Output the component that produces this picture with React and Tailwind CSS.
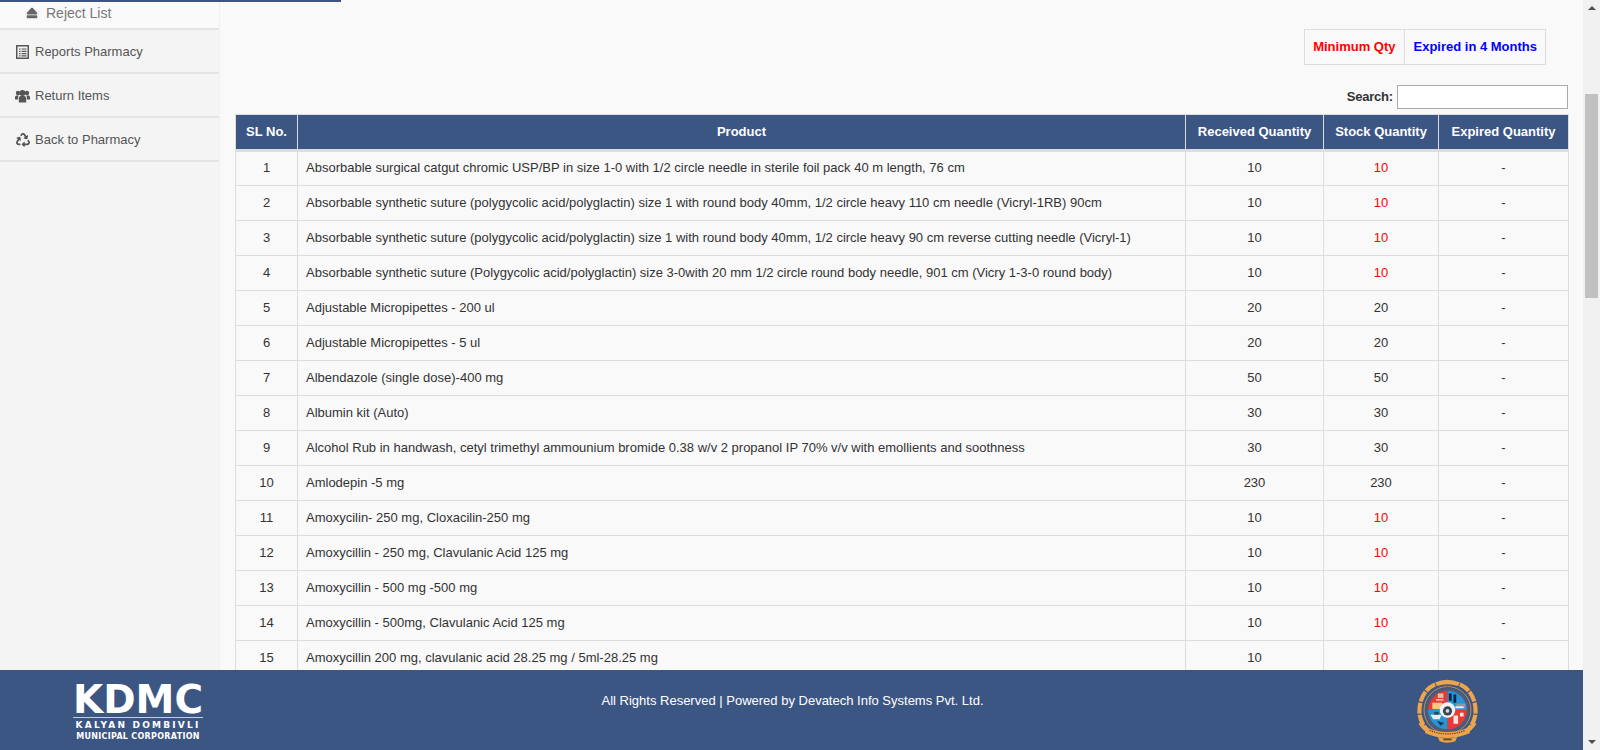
import React from "react";
import { FaEject, FaRecycle } from "react-icons/fa";

const rows = [
  ["Absorbable surgical catgut chromic USP/BP in size 1-0 with 1/2 circle needle in sterile foil pack 40 m length, 76 cm", 10, 10, true],
  ["Absorbable synthetic suture (polygycolic acid/polyglactin) size 1 with round body 40mm, 1/2 circle heavy 110 cm needle (Vicryl-1RB) 90cm", 10, 10, true],
  ["Absorbable synthetic suture (polygycolic acid/polyglactin) size 1 with round body 40mm, 1/2 circle heavy 90 cm reverse cutting needle (Vicryl-1)", 10, 10, true],
  ["Absorbable synthetic suture (Polygycolic acid/polyglactin) size 3-0with 20 mm 1/2 circle round body needle, 901 cm (Vicry 1-3-0 round body)", 10, 10, true],
  ["Adjustable Micropipettes - 200 ul", 20, 20, false],
  ["Adjustable Micropipettes - 5 ul", 20, 20, false],
  ["Albendazole (single dose)-400 mg", 50, 50, false],
  ["Albumin kit (Auto)", 30, 30, false],
  ["Alcohol Rub in handwash, cetyl trimethyl ammounium bromide 0.38 w/v 2 propanol IP 70% v/v with emollients and soothness", 30, 30, false],
  ["Amlodepin -5 mg", 230, 230, false],
  ["Amoxycilin- 250 mg, Cloxacilin-250 mg", 10, 10, true],
  ["Amoxycillin - 250 mg, Clavulanic Acid 125 mg", 10, 10, true],
  ["Amoxycillin - 500 mg -500 mg", 10, 10, true],
  ["Amoxycillin - 500mg, Clavulanic Acid 125 mg", 10, 10, true],
  ["Amoxycillin 200 mg, clavulanic acid 28.25 mg / 5ml-28.25 mg", 10, 10, true],
];

const th = "border border-[#dddddd] font-bold text-white text-center px-2 h-[36px] border-b-[3px]";
const td = "border border-[#dddddd] h-[35px] px-2 text-center text-[#333333]";

function ListAlt() {
  return (
    <svg width="13" height="14" viewBox="0 0 13 14">
      <rect x="0.75" y="0.75" width="11.5" height="12.5" fill="none" stroke="#555555" strokeWidth="1.5" />
      <path d="M3 4h1.5M3 6.3h1.5M3 8.6h1.5M3 10.9h1.5" stroke="#555555" strokeWidth="1.2" />
      <path d="M5.5 4h5M5.5 6.3h5M5.5 8.6h5M5.5 10.9h5" stroke="#555555" strokeWidth="1.2" />
    </svg>
  );
}

function Users() {
  return (
    <svg width="15" height="14" viewBox="0 0 15 14" fill="#555555">
      <circle cx="3" cy="4" r="2.2" />
      <circle cx="12" cy="4" r="2.2" />
      <path d="M0 10.5V8.2C0 7 1 6.5 2 6.5h1.8c-.6.8-.8 1.6-.8 4z" />
      <path d="M15 10.5V8.2c0-1.200-1-1.700-2-1.700h-1.800c.6.800.8 1.600.8 4z" />
      <circle cx="7.500" cy="4" r="3" />
      <path d="M3.800 13.500V9.500c0-1.700 1-2.500 2.200-2.500h3c1.200 0 2.200.8 2.200 2.500v4z" />
    </svg>
  );
}

function NavItem({ icon, label }) {
  return (
    <div className="h-[44px] flex items-center pl-[15px] gap-[5px] pt-[2px] border-b-2 border-[#e4e4e4] text-[13px] text-[#555555]">
      <span className="w-[15px] flex justify-center text-[14px]">{icon}</span>
      <span>{label}</span>
    </div>
  );
}

function Crest() {
  return (
    <svg width="75" height="75" viewBox="0 0 75 75">
      <g transform="translate(37.500 37.500) scale(0.92) translate(-37.500 -37.500)">
        <path d="M24 9C13 14 7 25 7 38c0 8 3 15 8 20" fill="none" stroke="#eea44a" strokeWidth="4.500" strokeDasharray="12 1.200" />
        <path d="M51 9c11 5 17 16 17 29 0 8-3 15-8 20" fill="none" stroke="#eea44a" strokeWidth="4.500" strokeDasharray="12 1.200" />
        <path d="M24 7Q37 1 51 7l-2 4Q37 7 26 11z" fill="#eea44a" />
        <rect x="31" y="11" width="13" height="3" fill="#3b4a68" />
        <circle cx="37.500" cy="37" r="24" fill="#4d5c78" />
        <circle cx="37.500" cy="37" r="25.500" fill="none" stroke="#c99a50" strokeWidth="1" />
        <path d="M37.500 16A21 21 0 0 0 16.500 37H37.500Z" fill="#e63a36" />
        <path d="M37.500 16A21 21 0 0 1 58.500 37H37.500Z" fill="#2595d6" />
        <path d="M16.500 37A21 21 0 0 0 37.500 58V37Z" fill="#2595d6" />
        <path d="M58.500 37A21 21 0 0 1 37.500 58V37Z" fill="#e63a36" />
        <rect x="21" y="29" width="11" height="7" fill="#f6c88a" />
        <path d="M27 19h6v5h-6zM25 25h8v2h-8z" fill="#f4b9a0" />
        <path d="M39 19h3v8h-3zM44 20h3v9h-3z" fill="#15233f" />
        <path d="M47 30h10v5H47z" fill="#8d97a6" />
        <path d="M46 33h9v2h-9z" fill="#f2f2f2" />
        <path d="M19 42h12l-2 5H22z" fill="#e9eef3" />
        <path d="M23 39h5v3h-5z" fill="#38465e" />
        <path d="M26 49l8 2-4 3z" fill="#26334d" />
        <path d="M44 43h5v9h-5zM51 40h4v4h-4z" fill="#f8e3da" />
        <circle cx="37.500" cy="37" r="8.500" fill="#f2f2f2" />
        <circle cx="37.500" cy="38" r="5" fill="#3a4257" />
        <circle cx="37.500" cy="38" r="2" fill="#d7dae0" />
        <path d="M9 50c3 3 5 6 8 8l-3 3c-3-2-6-6-8-9z" fill="#eea44a" />
        <path d="M66 50c-3 3-5 6-8 8l3 3c3-2 6-6 8-9z" fill="#eea44a" />
        <path d="M15 56Q37 66 60 56l2 6Q37 73 13 62z" fill="#eea44a" />
        <path d="M18 59Q37 67 57 59" fill="none" stroke="#6a4a2a" strokeWidth="1.300" strokeDasharray="1.500 1" />
        <path d="M27 66Q37 70 48 66l-2 5Q37 74 29 71z" fill="#eea44a" />
        <rect x="33" y="68" width="9" height="2" fill="#6a4a2a" />
      </g>
    </svg>
  );
}

export default function App() {
  return (
    <div className="h-[750px] w-[1600px] overflow-hidden flex bg-[#f9f9f9] font-['Liberation_Sans',Arial,sans-serif] text-[13px]">
      <div className="w-[1583px] h-[750px] flex flex-col relative">
        <div className="absolute top-0 left-0 w-[341px] h-[2px] bg-[#3c5684]" />
        <div className="flex-1 min-h-0 flex">
          <aside className="w-[220px] shrink-0 bg-[#f4f4f4] border-r border-[#f0f0f0]">
            <div className="h-[30px] bg-[#fafafa] border-b-2 border-[#e4e4e4] flex items-center pl-[26px] pb-[2px] gap-[8px] text-[14px] text-[#777777]">
              <FaEject className="text-[#666666] text-[12px]" />
              <span>Reject List</span>
            </div>
            <NavItem icon={<ListAlt />} label="Reports Pharmacy" />
            <NavItem icon={<Users />} label="Return Items" />
            <NavItem icon={<FaRecycle className="text-[#555555]" />} label="Back to Pharmacy" />
          </aside>
          <main className="flex-1 min-w-0 pl-[15px] pr-[15px] overflow-hidden">
            <div className="flex justify-end pt-[29px] pr-[22px]">
              <div className="flex h-[36px] border border-[#dddddd] font-bold">
                <div className="pl-[8px] pr-[9px] flex items-center text-[#ff0000] border-r border-[#dddddd]">Minimum Qty</div>
                <div className="px-[8px] flex items-center text-[#0000ff]">Expired in 4 Months</div>
              </div>
            </div>
            <div className="flex justify-end items-center gap-[4px] mt-[20px] h-[24px] font-bold text-[#333333]">
              <span className="tracking-[-0.2px]">Search:</span>
              <input className="w-[171px] h-[24px] border border-[#aaaaaa] bg-white" />
            </div>
            <table className="mt-[5px] w-[1333px] table-fixed border-collapse">
              <colgroup>
                <col className="w-[62px]" />
                <col className="w-[888px]" />
                <col className="w-[138px]" />
                <col className="w-[115px]" />
                <col className="w-[130px]" />
              </colgroup>
              <thead>
                <tr className="bg-[#3c5684]">
                  <th className={th}>SL No.</th>
                  <th className={th}>Product</th>
                  <th className={th}>Received Quantity</th>
                  <th className={th}>Stock Quantity</th>
                  <th className={th}>Expired Quantity</th>
                </tr>
              </thead>
              <tbody>
                {rows.map((r, i) => (
                  <tr key={i} className={i === 0 ? "[&>td]:pb-[2px]" : ""}>
                    <td className={td}>{i + 1}</td>
                    <td className={td + " !text-left"}>{r[0]}</td>
                    <td className={td}>{r[1]}</td>
                    <td className={td + (r[3] ? " !text-[#ff0000]" : "")}>{r[2]}</td>
                    <td className={td}>-</td>
                  </tr>
                ))}
              </tbody>
            </table>
          </main>
        </div>
        <footer className="h-[80px] shrink-0 bg-[#3c5684] flex items-center text-white">
          <div className="w-[73px] shrink-0" />
          <div className="w-[130px] shrink-0 flex flex-col items-stretch pt-[5px] font-['DejaVu_Sans',sans-serif]">
            <div className="font-bold text-[39px] leading-[33px] border-b border-[#c5cede] pb-[1px] text-center whitespace-nowrap">KDMC</div>
            <div className="text-[9px] leading-[11px] mt-[2px] font-bold tracking-[2.2px] text-center whitespace-nowrap">KALYAN DOMBIVLI</div>
            <div className="text-[8px] leading-[11px] font-bold tracking-[0.3px] text-center whitespace-nowrap">MUNICIPAL CORPORATION</div>
          </div>
          <div className="flex-1 text-center text-[13px] pr-[28px] pb-[18px]">All Rights Reserved | Powered by Devatech Info Systems Pvt. Ltd.</div>
          <div className="shrink-0 mr-[98px]"><Crest /></div>
        </footer>
      </div>
      <div className="w-[17px] h-[750px] bg-[#f1f1f1] flex flex-col items-center relative">
        <div className="mt-[6px] w-0 h-0 border-x-[4px] border-x-transparent border-b-[4px] border-b-[#505050]" />
        <div className="absolute top-[94px] left-[2px] w-[13px] h-[204px] bg-[#c1c1c1]" />
        <div className="mt-auto mb-[6px] w-0 h-0 border-x-[4px] border-x-transparent border-t-[4px] border-t-[#505050]" />
      </div>
    </div>
  );
}
